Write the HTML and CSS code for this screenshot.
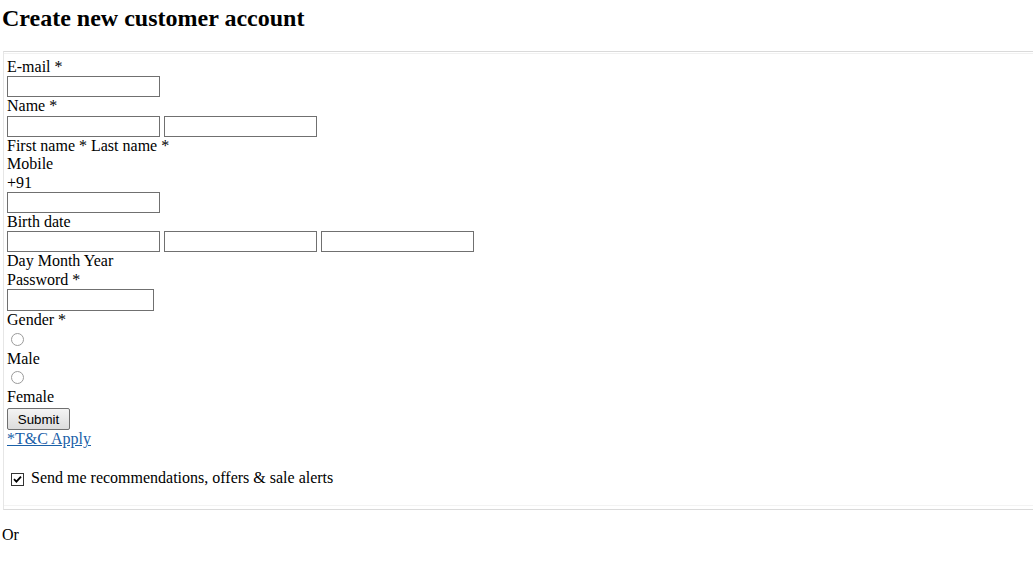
FILE: index.html
```html
<!DOCTYPE html>
<html>
<head>
<meta charset="utf-8">
<title>Create new customer account</title>
<link rel="stylesheet" href="styles.css">
</head>
<body>
<div class="page">
  <h2 class="title">Create new customer account</h2>
  <form class="signup">
    <fieldset class="box">
      <div class="label">E-mail *</div>
      <div class="row"><input class="field" type="text"></div>
      <div class="label">Name *</div>
      <div class="row"><input class="field" type="text"><input class="field" type="text"></div>
      <div class="label">First name * Last name *</div>
      <div class="label">Mobile</div>
      <div class="label">+91</div>
      <div class="row"><input class="field" type="text"></div>
      <div class="label">Birth date</div>
      <div class="row"><input class="field" type="text"><input class="field" type="text"><input class="field" type="text"></div>
      <div class="label">Day Month Year</div>
      <div class="label">Password *</div>
      <div class="row"><input class="field field-pass" type="password"></div>
      <div class="label">Gender *</div>
      <div class="radio-line"><input class="radio" type="radio" name="g"></div>
      <div class="label">Male</div>
      <div class="radio-line"><input class="radio" type="radio" name="g"></div>
      <div class="label">Female</div>
      <button class="submit" type="button">Submit</button>
      <div class="label"><a class="terms" href="#">*T&amp;C Apply</a></div>
      <p class="optin"><input class="check" type="checkbox" checked> Send me recommendations, offers &amp; sale alerts</p>
    </fieldset>
  </form>
  <p class="or">Or</p>
</div>
</body>
</html>
```
FILE: styles.css
```css
html, body {
  margin: 0;
  padding: 0;
  overflow-x: hidden;
  background: #fff;
}
body {
  font-family: "Liberation Serif", "Times New Roman", serif;
  font-size: 16px;
  color: #000;
}
.page {
  padding: 0 0 0 2px;
}
.title {
  font-size: 24px;
  font-weight: bold;
  margin: 5px 0 19px 0;
  line-height: normal;
}
.signup {
  margin: 0;
}
.box {
  margin: 0 0 0 1px;
  width: calc(100% + 20px);
  box-sizing: border-box;
  padding: 6px 3px 4px 3px;
  border: 1px solid #dadada;
  border-left-color: #e6e6e6;
  box-shadow: inset 0 1px 0 #fff, inset 0 2px 0 #f1f1f1, inset 0 -3px 0 #fff, inset 0 -4px 0 #f3f3f3;
  min-width: 0;
}
.label {
  line-height: 18.4px;
}
.row {
  display: flex;
  gap: 4px;
}
.field {
  box-sizing: border-box;
  width: 153px;
  height: 21px;
  margin: 0;
  padding: 1px 2px;
  border: 1px solid #707070;
  border-radius: 0;
  background: #fff;
  font: 13.33px "Liberation Sans", Arial, sans-serif;
}
.field-pass {
  width: 147px;
  height: 22px;
}
.radio-line {
  line-height: normal;
}
.radio {
  appearance: none;
  -webkit-appearance: none;
  box-sizing: border-box;
  width: 13px;
  height: 13px;
  margin: 3px 3px 0 4px;
  border: 1px solid #9b9b9b;
  border-radius: 50%;
  background: #fff;
}
.submit {
  display: block;
  box-sizing: border-box;
  width: 63px;
  height: 22px;
  margin: 2px 0 0 0;
  padding: 0;
  border: 1px solid #707070;
  border-radius: 2px;
  background: linear-gradient(#f4f4f4, #dcdcdc);
  font: 13.33px "Liberation Sans", Arial, sans-serif;
  color: #000;
}
.terms {
  color: #1a60a8;
  text-decoration: underline;
}
.optin {
  margin: 20px 0 16px 0;
  line-height: 18.4px;
}
.check {
  appearance: none;
  -webkit-appearance: none;
  box-sizing: border-box;
  width: 13px;
  height: 13px;
  margin: 3px 3px 3px 4px;
  vertical-align: -6px;
  border: 1px solid #333;
  border-radius: 0;
  background: #fff url("data:image/svg+xml,%3Csvg xmlns='http://www.w3.org/2000/svg' viewBox='0 0 11 11'%3E%3Cpath d='M2 5.2 L4.4 7.6 L9 2.6' fill='none' stroke='%23000' stroke-width='1.8'/%3E%3C/svg%3E") center / 11px 11px no-repeat;
}
.or {
  margin: 16px 0 0 0;
  line-height: 18.4px;
}
```
